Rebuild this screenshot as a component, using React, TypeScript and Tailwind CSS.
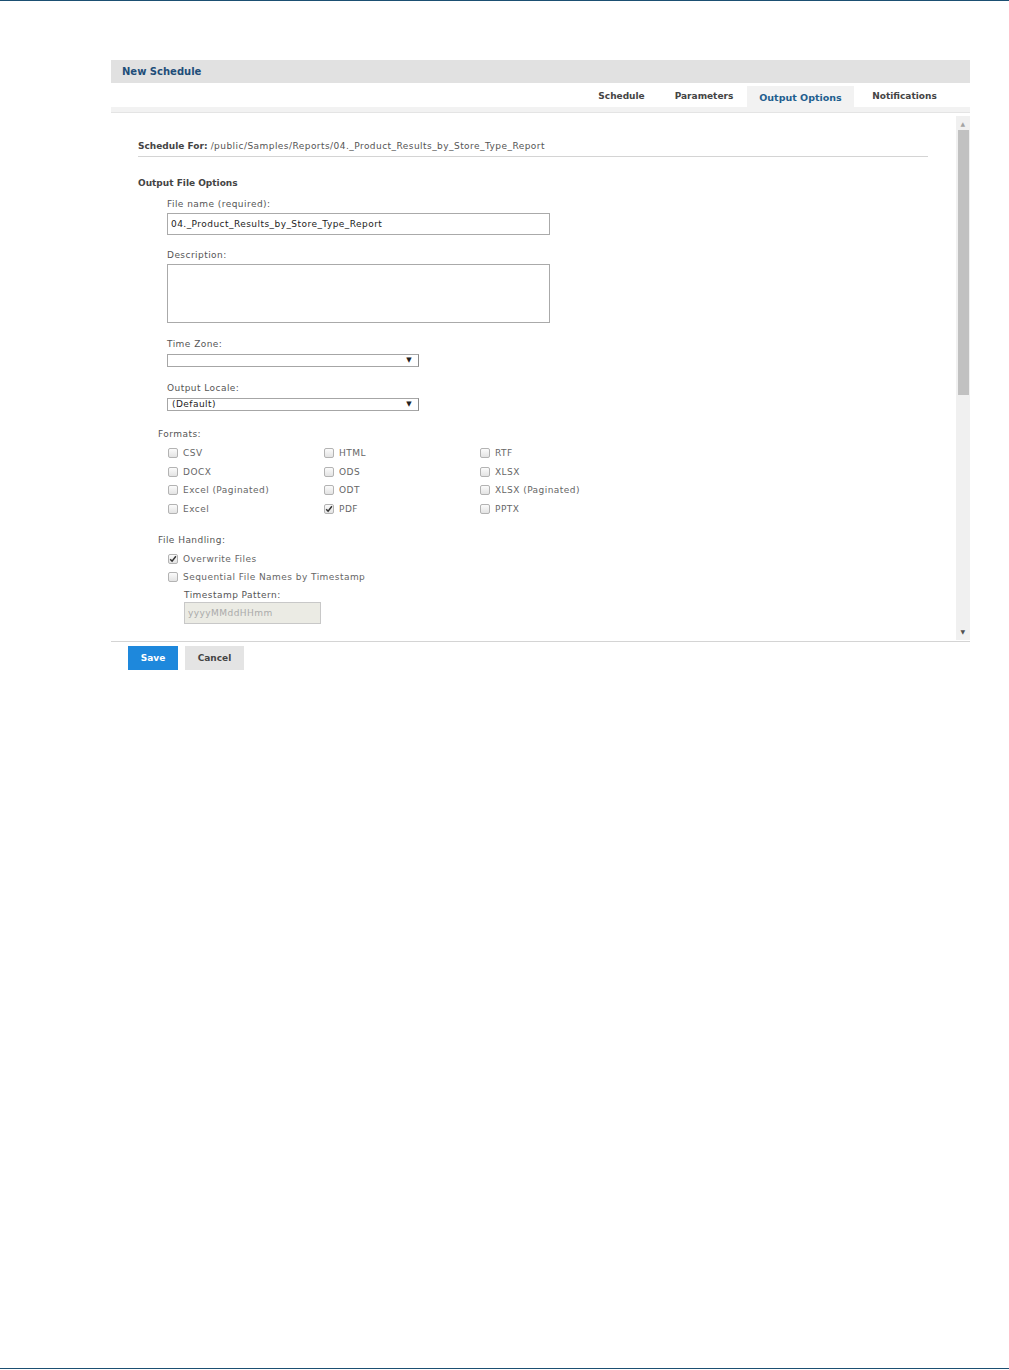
import React from "react";

const Check = ({ checked = false }: { checked?: boolean }) => (
  <span className="flex h-[10px] w-[10px] items-center justify-center rounded-[2px] border border-[#b3b3b3] bg-[linear-gradient(to_bottom,#fbfbfb,#e3e3e3)]">
    {checked && (
      <svg width="8" height="8" viewBox="0 0 8 8">
        <path d="M1.2 4.2 L3.1 6.2 L6.9 1.3" fill="none" stroke="#333" strokeWidth="1.5" />
      </svg>
    )}
  </span>
);

const Option = ({ label, checked }: { label: string; checked?: boolean }) => (
  <div className="flex h-[18.7px] items-center">
    <div className="flex w-[16px] pl-[1px]">
      <Check checked={checked} />
    </div>
    <span className="text-[#666]">{label}</span>
  </div>
);

const Select = ({ value }: { value?: string }) => (
  <div className="mt-[4px] flex h-[13px] w-[252px] items-center justify-between border border-[#a6a6a6] border-r-[#8a8a8a] bg-white pl-[4px] pr-[6px] text-[#222]">
    <span className="leading-[11px]">{value}</span>
    <span className="text-[7px] leading-none text-[#222]">▼</span>
  </div>
);

const tabs = [
  { name: "Schedule", w: "w-[71px]" },
  { name: "Parameters", w: "w-[86px]" },
];

export default function App() {
  return (
    <div className="h-[1370px] bg-white font-['DejaVu_Sans',sans-serif] text-[9px] leading-[12px] tracking-[0.45px] text-[#555]">
      <div className="flex h-[1369px] flex-col border-b border-t border-[#1b4f72]">
        <div className="ml-[111px] mt-[59px] w-[859px]">
          {/* title bar */}
          <div className="flex h-[23px] items-center bg-[#e1e1e1] pl-[11px] text-[10px] font-bold tracking-normal text-[#1f4e79]">
            New Schedule
          </div>

          {/* tabs */}
          <div className="flex h-[30px] justify-end border-b border-[#e4e4e4] bg-[linear-gradient(to_bottom,#ffffff_24px,#f2f2f2_24px)] pr-[15px] font-bold tracking-normal text-[#444]">
            {tabs.map((t) => (
              <div key={t.name} className={`${t.w} ml-[4px] pt-[7px] text-center`}>
                {t.name}
              </div>
            ))}
            <div className="mt-[3px] w-[107px] bg-[#f2f2f2] pt-[6px] text-center text-[9.5px] text-[#1f5f8f]">
              Output Options
            </div>
            <div className="w-[101px] pt-[7px] text-center">Notifications</div>
          </div>

          {/* panel */}
          <div className="flex h-[529px] border-b border-[#d4d4d4]">
            <div className="flex-1 pl-[27px] pr-[28px] pt-[27px]">
              <div className="border-b border-[#d4d4d4] pb-[4px]">
                <span className="font-bold tracking-normal text-[#444]">Schedule For: </span>
                <span>/public/Samples/Reports/04._Product_Results_by_Store_Type_Report</span>
              </div>

              <div className="mt-[20px] font-bold tracking-normal text-[#444]">Output File Options</div>

              <div className="pl-[29px]">
                <div className="mt-[9px]">File name (required):</div>
                <div className="mt-[3px] flex h-[22px] w-[383px] items-center border border-[#aaa] pl-[3px] text-[#222]">
                  04._Product_Results_by_Store_Type_Report
                </div>

                <div className="mt-[14px]">Description:</div>
                <div className="mt-[3px] h-[59px] w-[383px] border border-[#aaa]" />

                <div className="mt-[15px]">Time Zone:</div>
                <Select />

                <div className="mt-[15px]">Output Locale:</div>
                <Select value="(Default)" />
              </div>

              <div className="pl-[20px]">
                <div className="mt-[17px]">Formats:</div>
                <div className="mt-[3.5px] grid grid-cols-[156px_156px_156px] pl-[9px]">
                  <div>
                    <Option label="CSV" />
                    <Option label="DOCX" />
                    <Option label="Excel (Paginated)" />
                    <Option label="Excel" />
                  </div>
                  <div>
                    <Option label="HTML" />
                    <Option label="ODS" />
                    <Option label="ODT" />
                    <Option label="PDF" checked />
                  </div>
                  <div>
                    <Option label="RTF" />
                    <Option label="XLSX" />
                    <Option label="XLSX (Paginated)" />
                    <Option label="PPTX" />
                  </div>
                </div>

                <div className="mt-[16px]">File Handling:</div>
                <div className="mt-[3px] pl-[9px]">
                  <Option label="Overwrite Files" checked />
                  <Option label="Sequential File Names by Timestamp" />
                  <div className="pl-[17px]">
                    <div className="mt-[2px]">Timestamp Pattern:</div>
                    <div className="mt-[1px] flex h-[22px] w-[137px] items-center border border-[#c8c8c8] bg-[#ebebe4] pl-[3px] text-[#aaa]">
                      yyyyMMddHHmm
                    </div>
                  </div>
                </div>
              </div>
            </div>

            {/* scrollbar */}
            <div className="mb-[1px] mt-[3px] flex w-[14px] flex-col items-center bg-[#f0f0f0]">
              <span className="mt-[5px] text-[6px] leading-[6px] text-[#a3a3a3]">▲</span>
              <div className="mt-[3px] h-[265px] w-[11px] bg-[#c1c1c1]" />
              <div className="flex-1" />
              <span className="mb-[5px] text-[6px] leading-[6px] text-[#505050]">▼</span>
            </div>
          </div>

          {/* buttons */}
          <div className="mt-[4px] flex gap-[7px] pl-[17px] font-bold tracking-normal">
            <button className="h-[24px] w-[50px] bg-[#1e88dc] text-white">Save</button>
            <button className="h-[24px] w-[59px] bg-[#e4e4e4] text-[#444]">Cancel</button>
          </div>
        </div>
      </div>
    </div>
  );
}
